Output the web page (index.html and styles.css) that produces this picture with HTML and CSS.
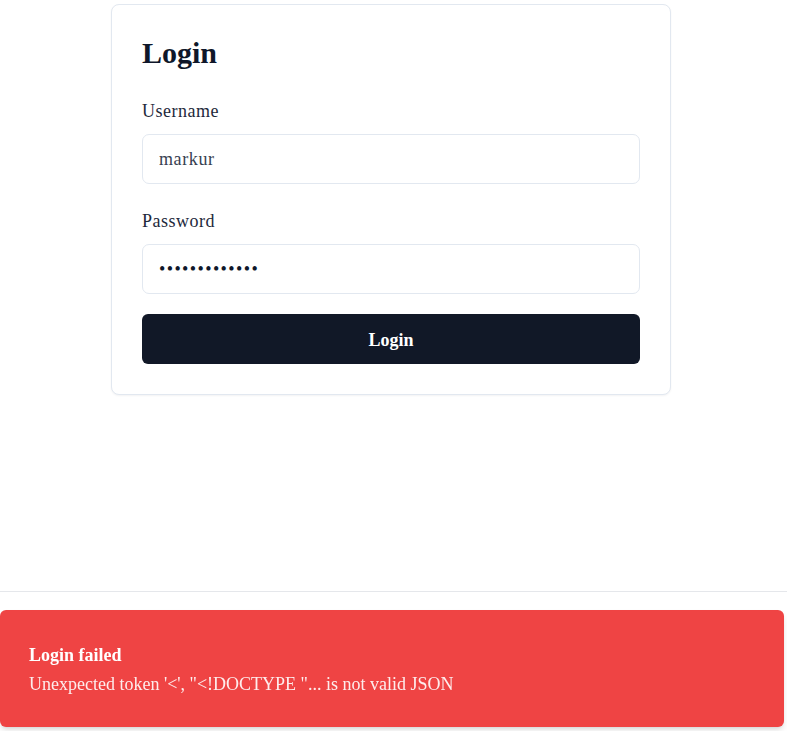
FILE: index.html
```html
<!DOCTYPE html>
<html lang="en">
<head>
<meta charset="utf-8">
<title>Login</title>
<link rel="stylesheet" href="styles.css">
</head>
<body>
<main class="page">
  <form class="card" onsubmit="return false">
    <h1 class="title">Login</h1>
    <label class="label" for="username">Username</label>
    <input class="field" id="username" type="text" value="markur">
    <label class="label label-pw" for="password">Password</label>
    <input class="field field-pw" id="password" type="password" value="markurpass123">
    <button class="btn" type="submit">Login</button>
  </form>
</main>
<footer class="footer"></footer>
<div class="toast" role="alert">
  <div class="toast-title">Login failed</div>
  <div class="toast-msg">Unexpected token '&lt;', "&lt;!DOCTYPE "... is not valid JSON</div>
</div>
</body>
</html>
```
FILE: styles.css
```css
* { box-sizing: border-box; }
html, body { margin: 0; padding: 0; background: #fff; }
body {
  font-family: "Liberation Serif", "Times New Roman", serif;
  font-size: 18px;
  line-height: 24px;
  color: #1f2937;
  overflow: hidden;
}
.page {
  height: 591px;
  display: flex;
  justify-content: center;
  align-items: flex-start;
  padding: 4px 5px 0 0;
}
.card {
  width: 560px;
  border: 1px solid #e2e8f0;
  border-radius: 8px;
  padding: 30px;
  display: flex;
  flex-direction: column;
  box-shadow: 0 1px 2px rgba(15, 23, 42, 0.05);
  background: #fff;
}
.title {
  margin: 0 0 28px 0;
  font-size: 30px;
  line-height: 36px;
  font-weight: 700;
  color: #0f172a;
}
.label {
  display: block;
  font-size: 18px;
  line-height: 24px;
  letter-spacing: 0.5px;
  color: #1e293b;
  margin-bottom: 11px;
}
.label-pw { margin-top: 25px; }
.field {
  display: block;
  width: 100%;
  height: 50px;
  border: 1px solid #e2e8f0;
  border-radius: 7px;
  padding: 0 16px;
  font-family: inherit;
  font-size: 18px;
  letter-spacing: 0.6px;
  color: #374151;
  background: #fff;
  outline: none;
}
.field-pw {
  color: #0f172a;
  letter-spacing: 1.4px;
}
.btn {
  margin-top: 20px;
  height: 50px;
  border: 0;
  border-radius: 6px;
  background: #111827;
  color: #fff;
  font-family: inherit;
  font-size: 18px;
  line-height: 24px;
  font-weight: 700;
  padding: 2px 0 0 0;
  cursor: pointer;
}
.footer {
  border-top: 1px solid #e5e7eb;
  height: 140px;
}
.toast {
  position: fixed;
  left: 0;
  top: 610px;
  width: 784px;
  height: 117px;
  background: #ef4444;
  border-radius: 6px;
  padding: 33px 28px 0 29px;
  color: #fff;
  box-shadow: 0 4px 6px -1px rgba(0,0,0,0.12), 0 2px 4px -2px rgba(0,0,0,0.1);
}
.toast-title {
  font-weight: 700;
  font-size: 18px;
  line-height: 24px;
}
.toast-msg {
  margin-top: 5px;
  font-size: 18px;
  line-height: 24px;
  color: rgba(255,255,255,0.9);
}
```
